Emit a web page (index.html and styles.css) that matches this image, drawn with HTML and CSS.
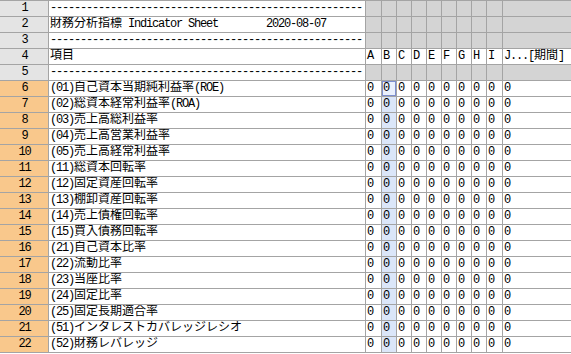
FILE: index.html
```html
<!DOCTYPE html>
<html lang="ja">
<head>
<meta charset="utf-8">
<title>財務分析指標 Indicator Sheet</title>
<link rel="stylesheet" href="styles.css">
</head>
<body>
<div class="sheet">
  <div class="row">
    <div class="hd">1</div>
    <div class="c lbl"><span class="h">----------------------------------------------------</span></div>
    <div class="g"></div><div class="g"></div><div class="g"></div><div class="g"></div><div class="g"></div><div class="g"></div><div class="g"></div><div class="g"></div><div class="g"></div><div class="g"></div>
  </div>
  <div class="row">
    <div class="hd">2</div>
    <div class="c lbl">財務分析指標<span class="h"> Indicator Sheet        2020-08-07</span></div>
    <div class="g"></div><div class="g"></div><div class="g"></div><div class="g"></div><div class="g"></div><div class="g"></div><div class="g"></div><div class="g"></div><div class="g"></div><div class="g"></div>
  </div>
  <div class="row">
    <div class="hd">3</div>
    <div class="c lbl"><span class="h">----------------------------------------------------</span></div>
    <div class="g"></div><div class="g"></div><div class="g"></div><div class="g"></div><div class="g"></div><div class="g"></div><div class="g"></div><div class="g"></div><div class="g"></div><div class="g"></div>
  </div>
  <div class="row">
    <div class="hd">4</div>
    <div class="c lbl">項目</div>
    <div class="c">A</div><div class="c">B</div><div class="c">C</div><div class="c">D</div><div class="c">E</div><div class="c">F</div><div class="c">G</div><div class="c">H</div><div class="c">I</div><div class="c"><span class="h">J...[</span>期間<span class="h">]</span></div>
  </div>
  <div class="row">
    <div class="hd">5</div>
    <div class="c lbl"><span class="h">----------------------------------------------------</span></div>
    <div class="g"></div><div class="g"></div><div class="g"></div><div class="g"></div><div class="g"></div><div class="g"></div><div class="g"></div><div class="g"></div><div class="g"></div><div class="g"></div>
  </div>
  <div class="row">
    <div class="hd o">6</div>
    <div class="c lbl"><span class="h">(01)</span>自己資本当期純利益率<span class="h">(ROE)</span></div>
    <div class="c">0</div><div class="c s sel">0</div><div class="c">0</div><div class="c">0</div><div class="c">0</div><div class="c">0</div><div class="c">0</div><div class="c">0</div><div class="c">0</div><div class="c">0</div>
  </div>
  <div class="row">
    <div class="hd o">7</div>
    <div class="c lbl"><span class="h">(02)</span>総資本経常利益率<span class="h">(ROA)</span></div>
    <div class="c">0</div><div class="c s">0</div><div class="c">0</div><div class="c">0</div><div class="c">0</div><div class="c">0</div><div class="c">0</div><div class="c">0</div><div class="c">0</div><div class="c">0</div>
  </div>
  <div class="row">
    <div class="hd o">8</div>
    <div class="c lbl"><span class="h">(03)</span>売上高総利益率</div>
    <div class="c">0</div><div class="c s">0</div><div class="c">0</div><div class="c">0</div><div class="c">0</div><div class="c">0</div><div class="c">0</div><div class="c">0</div><div class="c">0</div><div class="c">0</div>
  </div>
  <div class="row">
    <div class="hd o">9</div>
    <div class="c lbl"><span class="h">(04)</span>売上高営業利益率</div>
    <div class="c">0</div><div class="c s">0</div><div class="c">0</div><div class="c">0</div><div class="c">0</div><div class="c">0</div><div class="c">0</div><div class="c">0</div><div class="c">0</div><div class="c">0</div>
  </div>
  <div class="row">
    <div class="hd o">10</div>
    <div class="c lbl"><span class="h">(05)</span>売上高経常利益率</div>
    <div class="c">0</div><div class="c s">0</div><div class="c">0</div><div class="c">0</div><div class="c">0</div><div class="c">0</div><div class="c">0</div><div class="c">0</div><div class="c">0</div><div class="c">0</div>
  </div>
  <div class="row">
    <div class="hd o">11</div>
    <div class="c lbl"><span class="h">(11)</span>総資本回転率</div>
    <div class="c">0</div><div class="c s">0</div><div class="c">0</div><div class="c">0</div><div class="c">0</div><div class="c">0</div><div class="c">0</div><div class="c">0</div><div class="c">0</div><div class="c">0</div>
  </div>
  <div class="row">
    <div class="hd o">12</div>
    <div class="c lbl"><span class="h">(12)</span>固定資産回転率</div>
    <div class="c">0</div><div class="c s">0</div><div class="c">0</div><div class="c">0</div><div class="c">0</div><div class="c">0</div><div class="c">0</div><div class="c">0</div><div class="c">0</div><div class="c">0</div>
  </div>
  <div class="row">
    <div class="hd o">13</div>
    <div class="c lbl"><span class="h">(13)</span>棚卸資産回転率</div>
    <div class="c">0</div><div class="c s">0</div><div class="c">0</div><div class="c">0</div><div class="c">0</div><div class="c">0</div><div class="c">0</div><div class="c">0</div><div class="c">0</div><div class="c">0</div>
  </div>
  <div class="row">
    <div class="hd o">14</div>
    <div class="c lbl"><span class="h">(14)</span>売上債権回転率</div>
    <div class="c">0</div><div class="c s">0</div><div class="c">0</div><div class="c">0</div><div class="c">0</div><div class="c">0</div><div class="c">0</div><div class="c">0</div><div class="c">0</div><div class="c">0</div>
  </div>
  <div class="row">
    <div class="hd o">15</div>
    <div class="c lbl"><span class="h">(15)</span>買入債務回転率</div>
    <div class="c">0</div><div class="c s">0</div><div class="c">0</div><div class="c">0</div><div class="c">0</div><div class="c">0</div><div class="c">0</div><div class="c">0</div><div class="c">0</div><div class="c">0</div>
  </div>
  <div class="row">
    <div class="hd o">16</div>
    <div class="c lbl"><span class="h">(21)</span>自己資本比率</div>
    <div class="c">0</div><div class="c s">0</div><div class="c">0</div><div class="c">0</div><div class="c">0</div><div class="c">0</div><div class="c">0</div><div class="c">0</div><div class="c">0</div><div class="c">0</div>
  </div>
  <div class="row">
    <div class="hd o">17</div>
    <div class="c lbl"><span class="h">(22)</span>流動比率</div>
    <div class="c">0</div><div class="c s">0</div><div class="c">0</div><div class="c">0</div><div class="c">0</div><div class="c">0</div><div class="c">0</div><div class="c">0</div><div class="c">0</div><div class="c">0</div>
  </div>
  <div class="row">
    <div class="hd o">18</div>
    <div class="c lbl"><span class="h">(23)</span>当座比率</div>
    <div class="c">0</div><div class="c s">0</div><div class="c">0</div><div class="c">0</div><div class="c">0</div><div class="c">0</div><div class="c">0</div><div class="c">0</div><div class="c">0</div><div class="c">0</div>
  </div>
  <div class="row">
    <div class="hd o">19</div>
    <div class="c lbl"><span class="h">(24)</span>固定比率</div>
    <div class="c">0</div><div class="c s">0</div><div class="c">0</div><div class="c">0</div><div class="c">0</div><div class="c">0</div><div class="c">0</div><div class="c">0</div><div class="c">0</div><div class="c">0</div>
  </div>
  <div class="row">
    <div class="hd o">20</div>
    <div class="c lbl"><span class="h">(25)</span>固定長期適合率</div>
    <div class="c">0</div><div class="c s">0</div><div class="c">0</div><div class="c">0</div><div class="c">0</div><div class="c">0</div><div class="c">0</div><div class="c">0</div><div class="c">0</div><div class="c">0</div>
  </div>
  <div class="row">
    <div class="hd o">21</div>
    <div class="c lbl"><span class="h">(51)</span>インタレストカバレッジレシオ</div>
    <div class="c">0</div><div class="c s">0</div><div class="c">0</div><div class="c">0</div><div class="c">0</div><div class="c">0</div><div class="c">0</div><div class="c">0</div><div class="c">0</div><div class="c">0</div>
  </div>
  <div class="row">
    <div class="hd o">22</div>
    <div class="c lbl"><span class="h">(52)</span>財務レバレッジ</div>
    <div class="c">0</div><div class="c s">0</div><div class="c">0</div><div class="c">0</div><div class="c">0</div><div class="c">0</div><div class="c">0</div><div class="c">0</div><div class="c">0</div><div class="c">0</div>
  </div>
</div>
</body>
</html>
```
FILE: styles.css
```css
html, body {
  margin: 0;
  padding: 0;
  background: #ffffff;
}

body {
  font-family: "Liberation Mono", "Noto Sans CJK JP", monospace;
  font-size: 12px;
  color: #000000;
}

.sheet {
  display: flex;
  flex-direction: column;
  gap: 1px;
  padding: 1px 0;
  background: #a4a4a4;
  width: 571px;
}

.row {
  display: grid;
  grid-template-columns: 48px 316px 15px repeat(7, 14px) 15px 68px;
  column-gap: 1px;
  height: 15px;
}

.row > div {
  line-height: 15px;
  white-space: pre;
  overflow: hidden;
  padding-left: 1px;
}

.hd {
  background: #e4e4e4;
  text-align: center;
  padding-left: 0 !important;
  letter-spacing: -1.2px;
  text-indent: 1px;
}

.hd.o {
  background: #f9c88c;
}

.c {
  background: #ffffff;
}

.g {
  background: #d4d4d4;
}

.s {
  background: #dbe6f9;
}

.sel {
  background: #eaf0fc;
  box-shadow: inset 0 0 0 1px #7d8fcf;
}

.h {
  letter-spacing: -1.2px;
}
```
